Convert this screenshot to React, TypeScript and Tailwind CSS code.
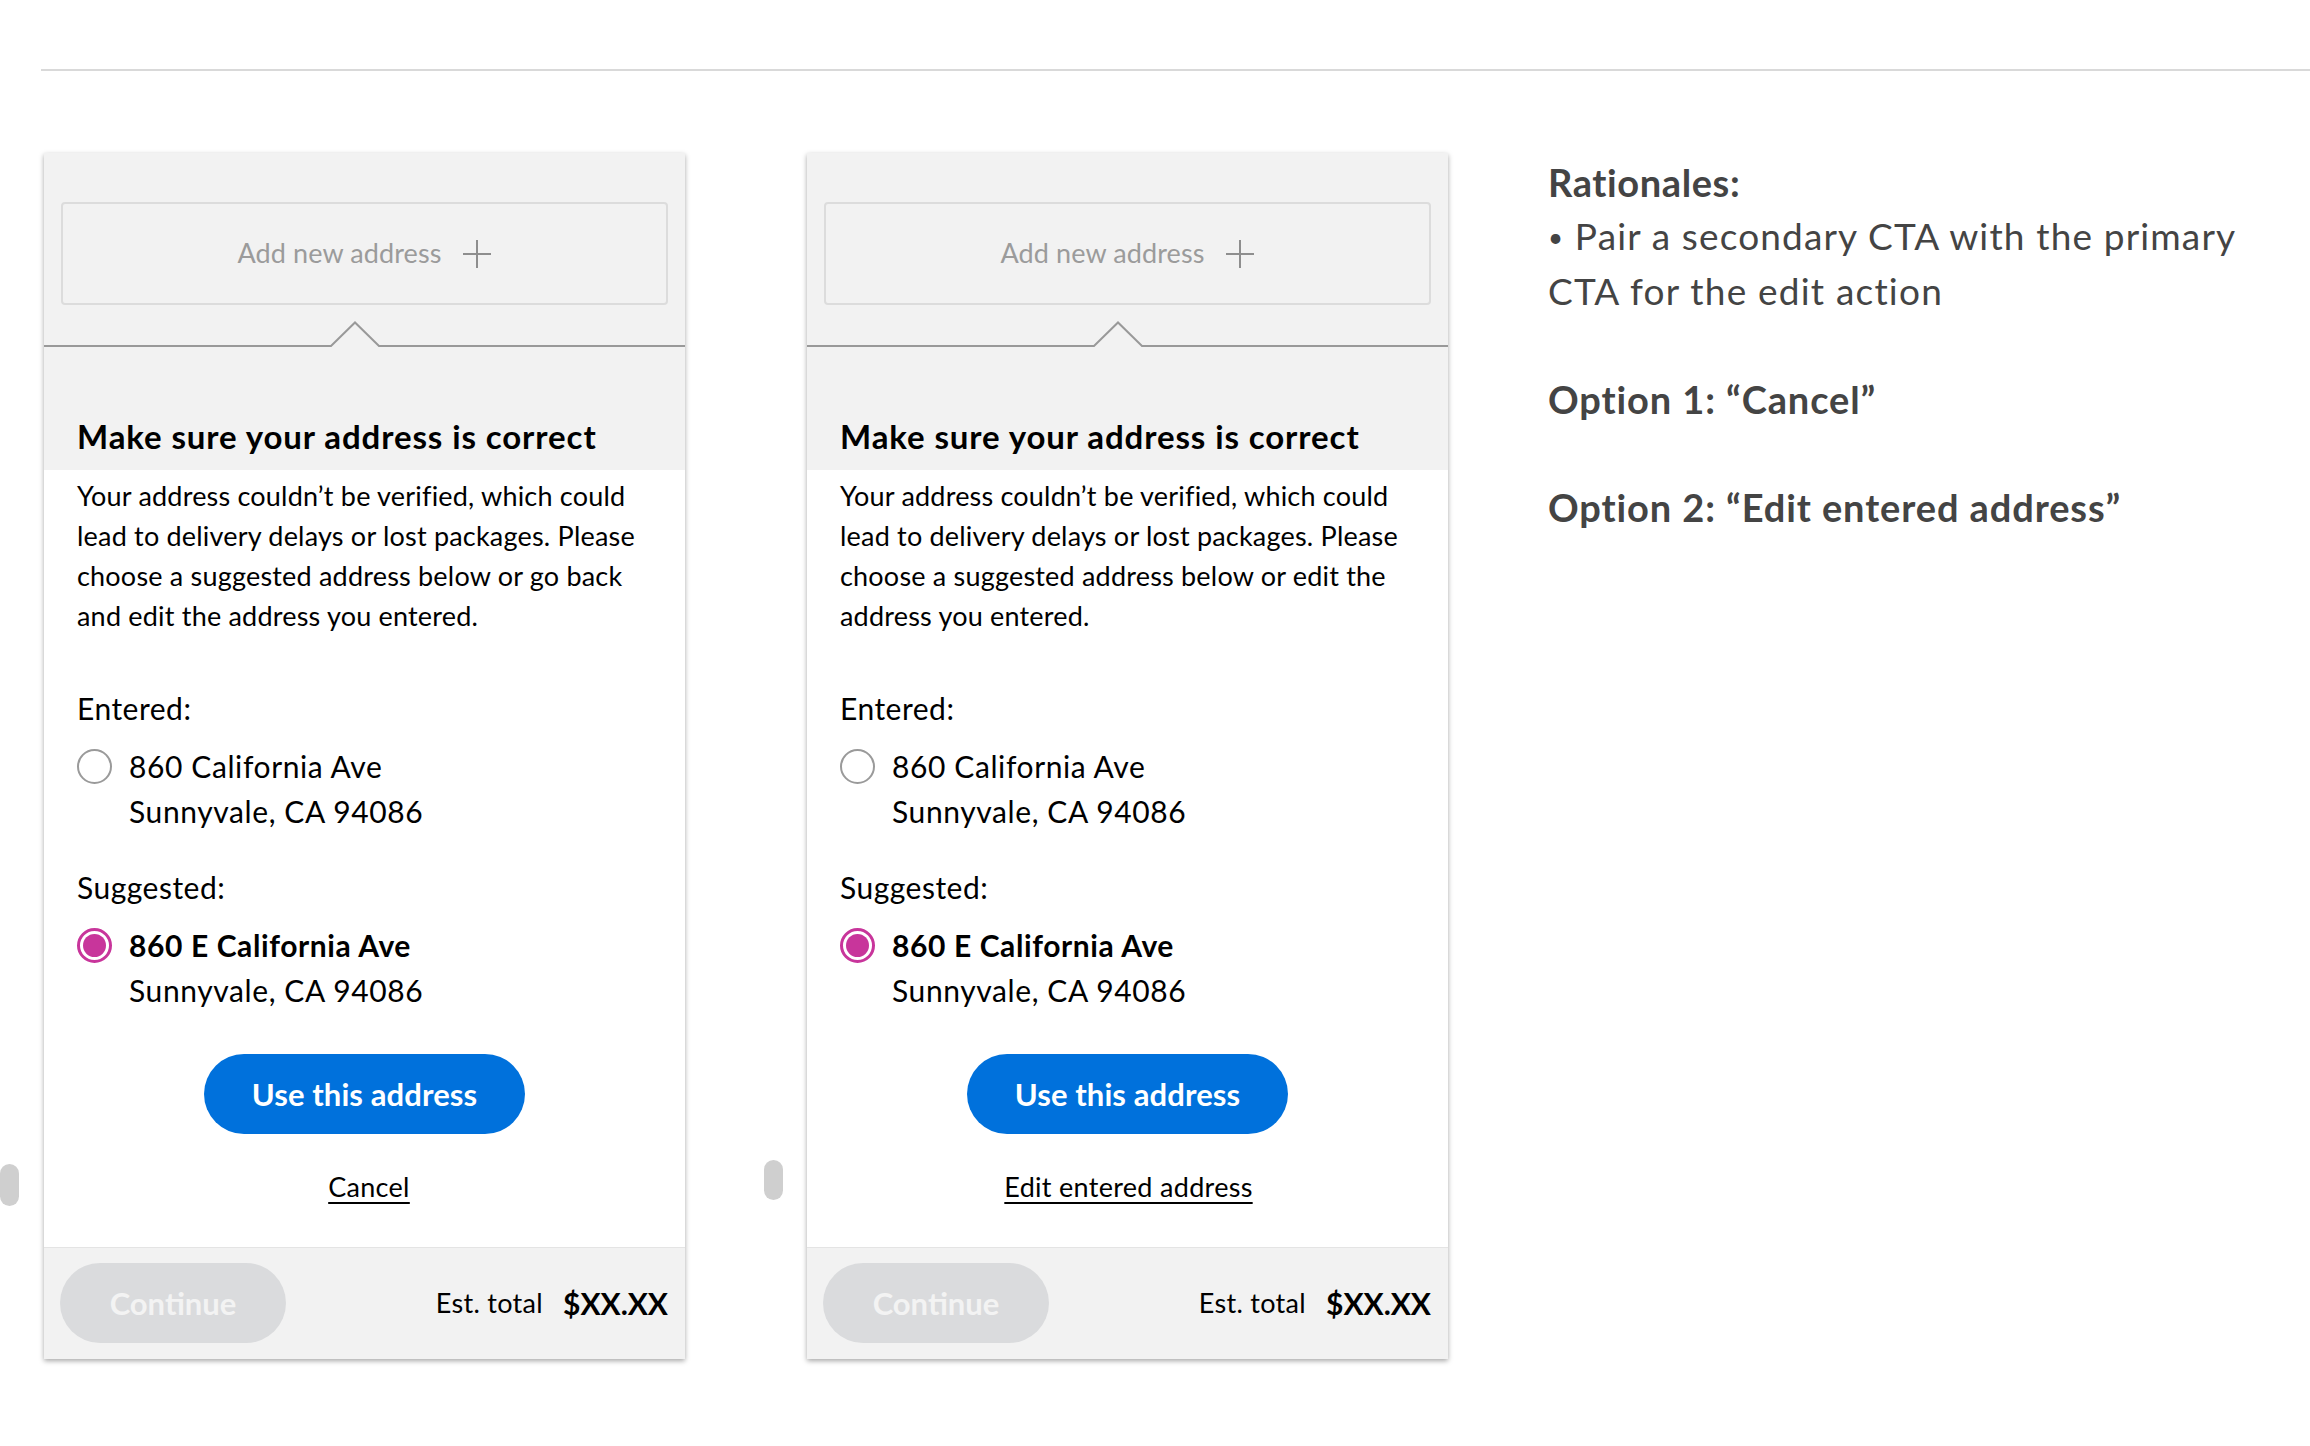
import React from 'react';

const cards = [
  {
    lines: [
      'Your address couldn’t be verified, which could',
      'lead to delivery delays or lost packages. Please',
      'choose a suggested address below or go back',
      'and edit the address you entered.',
    ],
    link: 'Cancel',
    linkPad: 'pl-[9px]',
  },
  {
    lines: [
      'Your address couldn’t be verified, which could',
      'lead to delivery delays or lost packages. Please',
      'choose a suggested address below or edit the',
      'address you entered.',
    ],
    link: 'Edit entered address',
    linkPad: 'pl-[2px]',
  },
];

function Radio({ checked }: { checked?: boolean }) {
  return (
    <div className="h-[45px] flex items-center shrink-0">
      {checked ? (
        <div className="w-[35px] h-[35px] rounded-full border-[3px] border-[#c8359b] flex items-center justify-center">
          <div className="w-[23px] h-[23px] rounded-full bg-[#c8359b]" />
        </div>
      ) : (
        <div className="w-[35px] h-[35px] rounded-full border-2 border-[#9a9a9a]" />
      )}
    </div>
  );
}

function AddressCard({ lines, link, linkPad }: { lines: string[]; link: string; linkPad: string }) {
  return (
    <div className="w-[641px] bg-white shadow-[0_2px_5px_rgba(0,0,0,0.35)] text-black">
      {/* header */}
      <div className="bg-[#f2f2f2] pt-[49px]">
        <div className="mx-[17px] h-[103px] border-2 border-[#dcdcdc] rounded-[4px] flex items-center justify-center">
          <span className="text-[27px] tracking-[0.1px] text-[#9b9b9b]">Add new address</span>
          <svg width="28" height="28" viewBox="0 0 28 28" className="ml-[22px]">
            <path d="M14 0V28M0 14H28" stroke="#8e8e8e" strokeWidth="2" />
          </svg>
        </div>
        <svg width="641" height="26" viewBox="0 0 641 26" className="block mt-[16px]">
          <polyline
            points="0,25 287,25 311,1.5 335,25 641,25"
            fill="none"
            stroke="#999"
            strokeWidth="2"
          />
        </svg>
        <h2 className="pt-[69px] pb-[14px] px-[33px] text-[33px] tracking-[0.9px] leading-[40px] font-bold whitespace-nowrap">
          Make sure your address is correct
        </h2>
      </div>

      {/* body */}
      <div className="px-[33px] pt-[6px] pb-[40px]">
        <p className="text-[27px] tracking-[0.2px] leading-[40px]">
          {lines.map((l) => (
            <span key={l} className="block whitespace-nowrap">{l}</span>
          ))}
        </p>

        <p className="mt-[52px] text-[30px] tracking-[0.5px] leading-[40px]">Entered:</p>
        <div className="mt-[16px] flex">
          <Radio />
          <div className="ml-[17px] text-[30px] tracking-[0.6px] leading-[45px]">
            <div>860 California Ave</div>
            <div>Sunnyvale, CA 94086</div>
          </div>
        </div>

        <p className="mt-[33px] text-[30px] tracking-[0.5px] leading-[40px]">Suggested:</p>
        <div className="mt-[16px] flex">
          <Radio checked />
          <div className="ml-[17px] text-[30px] tracking-[0.6px] leading-[45px]">
            <div className="font-bold">860 E California Ave</div>
            <div>Sunnyvale, CA 94086</div>
          </div>
        </div>

        <button className="mt-[41px] mx-auto flex items-center justify-center w-[321px] h-[80px] rounded-full bg-[#0071dc] text-white text-[31px] tracking-[0.1px] font-bold">
          Use this address
        </button>

        <div className={`mt-[33px] text-center text-[27px] tracking-[0.3px] leading-[40px] ${linkPad}`}>
          <span className="underline decoration-2 underline-offset-[5px]">{link}</span>
        </div>
      </div>

      {/* footer */}
      <div className="bg-[#f2f2f2] border-t border-[#e4e4e4] pt-[15px] pb-[16px] pl-[16px] pr-[17px] flex items-center justify-between">
        <button className="w-[226px] h-[80px] rounded-full bg-[#dadbdd] text-[#f3f3f3] text-[31px] font-bold">
          Continue
        </button>
        <div className="flex items-center">
          <span className="text-[27px] tracking-[0.3px]">Est. total</span>
          <span className="ml-[20px] text-[30px] font-bold">$XX.XX</span>
        </div>
      </div>
    </div>
  );
}

export default function App() {
  return (
    <div className="w-[2310px] h-[1446px] bg-white overflow-hidden font-['Lato',sans-serif]">
      <div className="ml-[41px] mt-[69px] h-[2px] bg-[#d9d9d9]" />

      <div className="flex items-start mt-[82px]">
        <div className="w-[19px] h-[42px] mt-[1011px] rounded-full bg-[#cfcfcf] shrink-0" />
        <div className="ml-[25px]">
          <AddressCard {...cards[0]} />
        </div>
        <div className="ml-[79px] w-[19px] h-[40px] mt-[1007px] rounded-full bg-[#cfcfcf] shrink-0" />
        <div className="ml-[24px]">
          <AddressCard {...cards[1]} />
        </div>

        {/* notes */}
        <div className="ml-[100px] mt-[2px] text-[#444] leading-[54px] whitespace-nowrap">
          <p className="text-[38px] tracking-[0.6px] font-bold">Rationales:</p>
          <p className="text-[37px] tracking-[1.15px]">
            <span className="text-[26px] align-[3px]">•</span> Pair a secondary CTA with the primary
          </p>
          <p className="text-[37px] tracking-[1.2px]">CTA for the edit action</p>
          <p className="mt-[54px] text-[38px] tracking-[0.9px] font-bold">Option 1: “Cancel”</p>
          <p className="mt-[54px] text-[38px] tracking-[0.9px] font-bold">Option 2: “Edit entered address”</p>
        </div>
      </div>
    </div>
  );
}
